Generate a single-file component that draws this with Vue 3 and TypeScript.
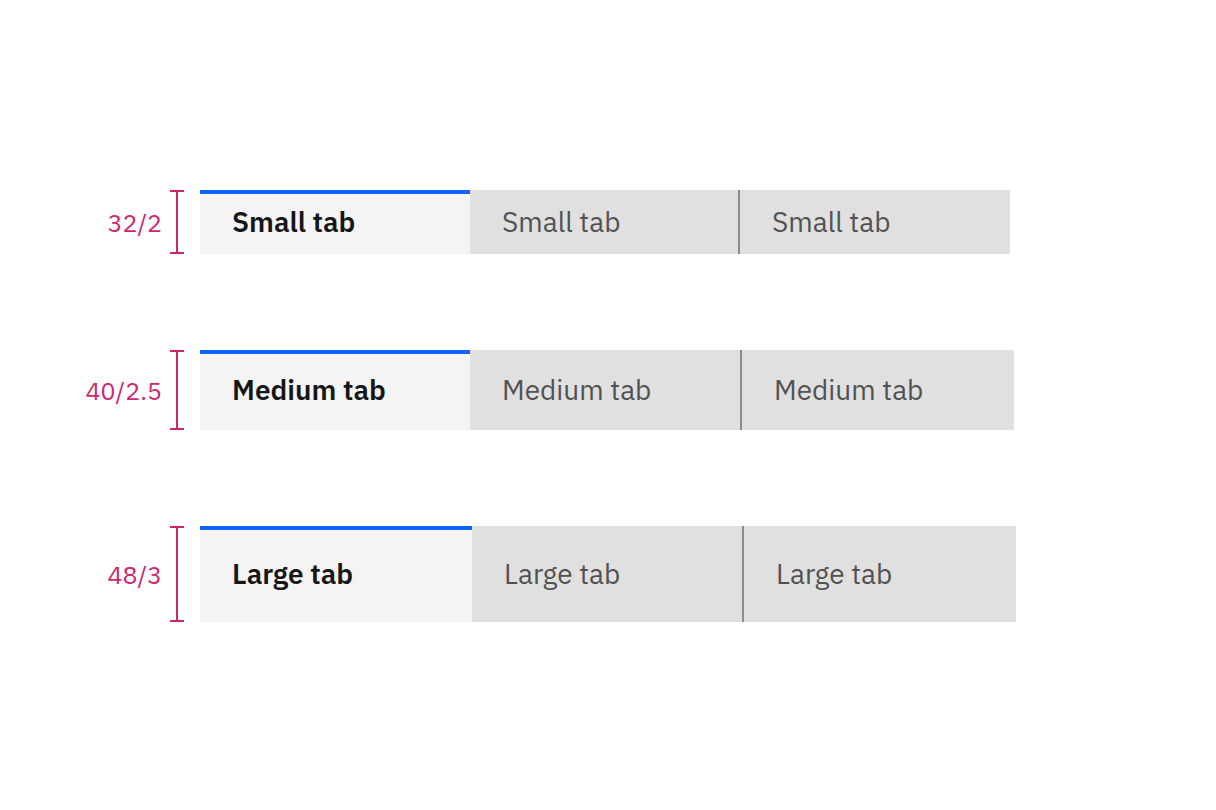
<script setup lang="ts">
import { ref } from 'vue'

interface TabRow {
  size: 'small' | 'medium' | 'large'
  label: string
  measure: string
}

const rows: TabRow[] = [
  { size: 'small', label: 'Small tab', measure: '32/2' },
  { size: 'medium', label: 'Medium tab', measure: '40/2.5' },
  { size: 'large', label: 'Large tab', measure: '48/3' },
]

const selected = ref<number[]>([0, 0, 0])
</script>

<template>
  <main class="specimen">
    <section v-for="(row, r) in rows" :key="row.size" class="row" :class="row.size">
      <div class="measure">
        <span class="value">{{ row.measure }}</span>
        <span class="bracket" aria-hidden="true"></span>
      </div>
      <div class="tabs" role="tablist" :aria-label="row.label">
        <button
          v-for="i in 3"
          :key="i"
          type="button"
          role="tab"
          class="tab"
          :class="{ selected: selected[r] === i - 1, divided: i > 1 && selected[r] !== i - 1 && selected[r] !== i - 2 }"
          :aria-selected="selected[r] === i - 1"
          @click="selected[r] = i - 1"
        >
          {{ row.label }}
        </button>
      </div>
    </section>
  </main>
</template>

<style>
body {
  margin: 0;
  background: #ffffff;
}
</style>

<style scoped>
.specimen {
  display: flex;
  flex-direction: column;
  gap: 96px;
  padding: 190px 200px 188px 72px;
  font-family: "IBM Plex Sans", "Noto Sans", sans-serif;
}

.row {
  display: grid;
  grid-template-columns: 112px minmax(0, 1fr);
  column-gap: 16px;
}

.measure {
  display: flex;
  align-items: center;
  justify-content: flex-end;
  gap: 8px;
  color: #d02670;
  font-size: 25px;
  line-height: 32px;
}

.value {
  padding-top: 2px;
}

.bracket {
  box-sizing: border-box;
  align-self: stretch;
  width: 14px;
  border: solid #d02670;
  border-width: 2px 0;
  background: linear-gradient(#d02670, #d02670) center / 2px 100% no-repeat;
}

.tabs {
  display: grid;
  grid-template-columns: repeat(3, minmax(0, 1fr));
  max-width: 810px;
}

.medium .tabs {
  grid-template-columns: 270fr 272fr 272fr;
  max-width: 814px;
}

.large .tabs {
  max-width: 816px;
}

.tab {
  position: relative;
  height: 64px;
  margin: 0;
  padding: 0 32px;
  border: 0;
  background: #e0e0e0;
  color: #525252;
  font-family: inherit;
  font-size: 28px;
  line-height: 36px;
  text-align: left;
  white-space: nowrap;
}

.medium .tab {
  height: 80px;
}

.large .tab {
  height: 96px;
}

.selected {
  background: #f4f4f4;
  box-shadow: inset 0 4px #0f62fe;
  color: #161616;
  font-weight: 600;
}

.divided::before {
  content: "";
  position: absolute;
  top: 0;
  bottom: 0;
  left: -2px;
  width: 2px;
  background: #8d8d8d;
}
</style>
